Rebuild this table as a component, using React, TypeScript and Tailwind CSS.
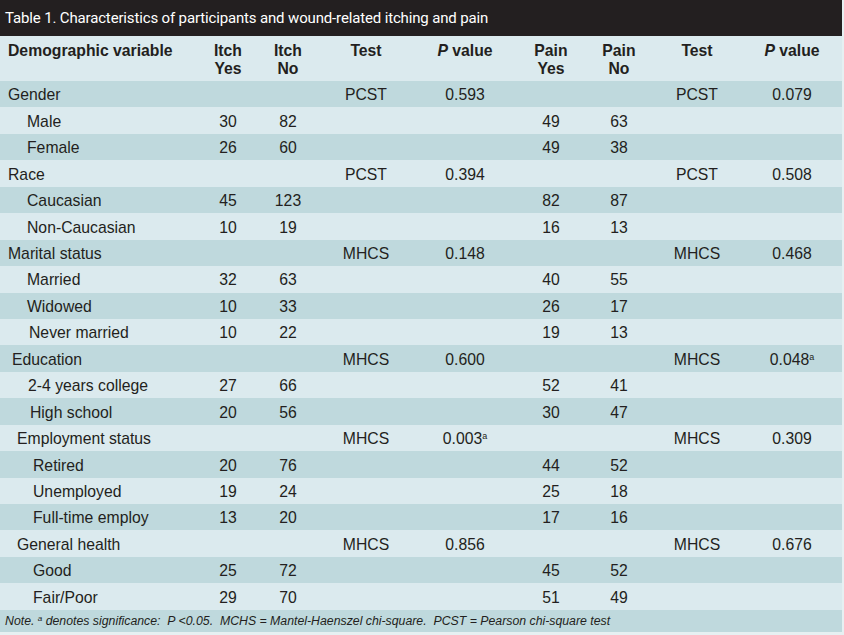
import React from "react";

type Row = {
  label: string;
  indent: string;
  iy?: string;
  ino?: string;
  t1?: string;
  p1?: string;
  p1a?: boolean;
  py?: string;
  pn?: string;
  t2?: string;
  p2?: string;
  p2a?: boolean;
};

const rows: Row[] = [
  { label: "Gender", indent: "pl-[8px]", t1: "PCST", p1: "0.593", t2: "PCST", p2: "0.079" },
  { label: "Male", indent: "pl-[27px]", iy: "30", ino: "82", py: "49", pn: "63" },
  { label: "Female", indent: "pl-[27px]", iy: "26", ino: "60", py: "49", pn: "38" },
  { label: "Race", indent: "pl-[8px]", t1: "PCST", p1: "0.394", t2: "PCST", p2: "0.508" },
  { label: "Caucasian", indent: "pl-[27px]", iy: "45", ino: "123", py: "82", pn: "87" },
  { label: "Non-Caucasian", indent: "pl-[27px]", iy: "10", ino: "19", py: "16", pn: "13" },
  { label: "Marital status", indent: "pl-[8px]", t1: "MHCS", p1: "0.148", t2: "MHCS", p2: "0.468" },
  { label: "Married", indent: "pl-[27px]", iy: "32", ino: "63", py: "40", pn: "55" },
  { label: "Widowed", indent: "pl-[27px]", iy: "10", ino: "33", py: "26", pn: "17" },
  { label: "Never married", indent: "pl-[29px]", iy: "10", ino: "22", py: "19", pn: "13" },
  { label: "Education", indent: "pl-[12px]", t1: "MHCS", p1: "0.600", t2: "MHCS", p2: "0.048", p2a: true },
  { label: "2-4 years college", indent: "pl-[28px]", iy: "27", ino: "66", py: "52", pn: "41" },
  { label: "High school", indent: "pl-[30px]", iy: "20", ino: "56", py: "30", pn: "47" },
  { label: "Employment status", indent: "pl-[17px]", t1: "MHCS", p1: "0.003", p1a: true, t2: "MHCS", p2: "0.309" },
  { label: "Retired", indent: "pl-[33px]", iy: "20", ino: "76", py: "44", pn: "52" },
  { label: "Unemployed", indent: "pl-[33px]", iy: "19", ino: "24", py: "25", pn: "18" },
  { label: "Full-time employ", indent: "pl-[33px]", iy: "13", ino: "20", py: "17", pn: "16" },
  { label: "General health", indent: "pl-[17px]", t1: "MHCS", p1: "0.856", t2: "MHCS", p2: "0.676" },
  { label: "Good", indent: "pl-[33px]", iy: "25", ino: "72", py: "45", pn: "52" },
  { label: "Fair/Poor", indent: "pl-[33px]", iy: "29", ino: "70", py: "51", pn: "49" },
];

const grid =
  "grid grid-cols-[198px_60px_60px_96px_102px_70px_66px_90px_100px]";

function P({ v, a }: { v?: string; a?: boolean }) {
  if (!v) return null;
  return (
    <span>
      {v}
      {a && <sup className="text-[9px] relative -top-[5px] align-baseline">a</sup>}
    </span>
  );
}

export default function App() {
  return (
    <div
      className="w-[844px] h-[635px] bg-[#e6f0f2] text-[#231f20] overflow-hidden"
      style={{ fontFamily: "'Liberation Sans', Arial, sans-serif" }}
    >
      <div className="w-[842px]">
        <div className="h-[36px] bg-[#231f20] flex items-center pl-[5px] text-white text-[15px]">
          <span
            className="tracking-[-0.15px]"
            style={{ fontFamily: "'Liberation Sans Narrow', Roboto, 'Liberation Sans', sans-serif" }}
          >
            Table 1. Characteristics of participants and wound-related itching and pain
          </span>
        </div>
        <div className={`${grid} h-[45px] bg-[#dbeaee] text-[15.75px] font-bold leading-[18px] pt-[6px]`}>
          <div className="pl-[8px]">Demographic variable</div>
          <div className="text-center">Itch<br />Yes</div>
          <div className="text-center">Itch<br />No</div>
          <div className="text-center">Test</div>
          <div className="text-center"><i>P</i> value</div>
          <div className="text-center">Pain<br />Yes</div>
          <div className="text-center">Pain<br />No</div>
          <div className="text-center">Test</div>
          <div className="text-center"><i>P</i> value</div>
        </div>
        {rows.map((r, i) => (
          <div
            key={i}
            className={`${grid} h-[26.45px] items-center pt-[2px] text-[15.75px] ${
              i % 2 === 0 ? "bg-[#bfd9dd]" : "bg-[#dbeaee]"
            }`}
          >
            <div className={r.indent}>{r.label}</div>
            <div className="text-center">{r.iy}</div>
            <div className="text-center">{r.ino}</div>
            <div className="text-center">{r.t1}</div>
            <div className="text-center"><P v={r.p1} a={r.p1a} /></div>
            <div className="text-center">{r.py}</div>
            <div className="text-center">{r.pn}</div>
            <div className="text-center">{r.t2}</div>
            <div className="text-center"><P v={r.p2} a={r.p2a} /></div>
          </div>
        ))}
        <div className="h-[22px] bg-[#bfd9dd] flex items-center pl-[5px] text-[12.3px] italic">
          <span>
            Note. <sup className="text-[8px] relative -top-[4px] align-baseline">a</sup> denotes significance:&nbsp; P &lt;0.05.&nbsp; MCHS = Mantel-Haenszel chi-square.&nbsp; PCST = Pearson chi-square test
          </span>
        </div>
      </div>
    </div>
  );
}
